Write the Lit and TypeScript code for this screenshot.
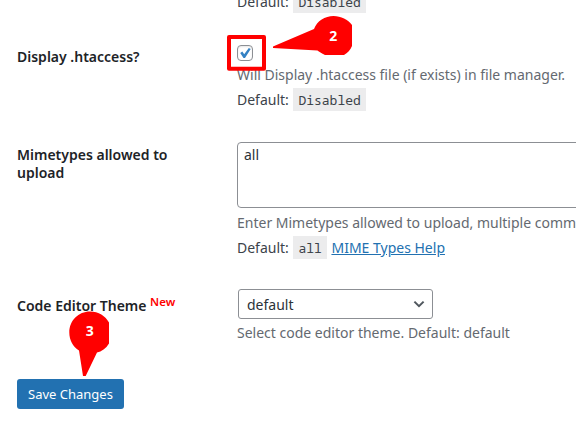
import { LitElement, html, css } from "lit";
import { customElement } from "lit/decorators.js";

@customElement("app-root")
export class AppRoot extends LitElement {
  static styles = css`
    :host {
      display: block;
      position: relative;
      width: 576px;
      height: 430px;
      overflow: hidden;
      background: #fff;
      color: #3c434a;
      font: 14px/25px "Noto Sans", sans-serif;
      white-space: nowrap;
    }
    * { box-sizing: border-box; }
    .form { display: flex; flex-direction: column; margin-top: -11px; }
    .row { display: grid; grid-template-columns: 220px 1fr; padding-left: 17px; }
    .row.access { padding-top: 31px; }
    .row.mime { padding-top: 30px; }
    .row.theme { padding-top: 29px; }
    .label { color: #1d2327; font-weight: 600; line-height: 18px; padding-top: 3px; }
    .theme .label { padding-top: 8px; }
    .mime .label { padding-top: 4px; }
    .field { min-width: 0; }
    .hint { color: #646970; height: 25px; }
    .line { height: 25px; }
    code {
      display: inline-block;
      height: 23px;
      line-height: 19px;
      padding: 3px 5px 1px 5.5px;
      margin: 0 1px 0 0.4px;
      background: #ececed;
      font-family: "Noto Sans Mono", "Liberation Mono", monospace;
      font-size: 13px;
    }
    .check {
      display: block;
      width: 16px;
      height: 16px;
      margin-bottom: 1px;
      border: 1px solid #8c8f94;
      border-radius: 4px;
      background: #fff;
      box-shadow: inset 0 1px 2px rgba(0, 0, 0, 0.1);
    }
    .check svg { display: block; width: 14px; height: 14px; }
    .area {
      width: 420px;
      height: 66px;
      padding: 2px 6px;
      margin-bottom: 2px;
      border: 1px solid #8c8f94;
      border-radius: 4px;
      color: #2c3338;
      line-height: 20px;
    }
    .select {
      display: flex;
      align-items: center;
      justify-content: space-between;
      width: 195px;
      height: 30px;
      margin: 0 0 1px 1px;
      padding: 0 5px 0 8px;
      border: 1px solid #8c8f94;
      border-radius: 3px;
      color: #2c3338;
    }
    a { color: #2271b1; text-decoration: underline; }
    .new {
      position: relative;
      top: -5px;
      color: #f00;
      font-size: 11.5px;
      font-weight: 600;
      line-height: 0;
    }
    .save {
      display: block;
      width: 107px;
      height: 30px;
      margin: 34px 0 0 17px;
      padding: 0;
      border: 0;
      border-radius: 3px;
      background: #2271b1;
      color: #fff;
      font: 13px/30px "Noto Sans", sans-serif;
      text-align: center;
    }
    .marks { position: absolute; inset: 0; pointer-events: none; }
    .marks text { font: 700 14px "Noto Sans", sans-serif; fill: #fff; text-anchor: middle; }
  `;

  render() {
    return html`
      <div class="form">
        <div class="row">
          <div></div>
          <div class="field"><div class="line">Default: <code>Disabled</code></div></div>
        </div>
        <div class="row access">
          <div class="label">Display .htaccess?</div>
          <div class="field">
            <span class="check" role="checkbox" aria-checked="true">
              <svg viewBox="0 0 14 14"><path d="M2.2 6.9 4.3 5.6 6.2 8.2 10.8 2 12.7 3 7 12 5.500 12Z" fill="#3582c4"/></svg>
            </span>
            <div class="hint">Will Display .htaccess file (if exists) in file manager.</div>
            <div class="line">Default: <code>Disabled</code></div>
          </div>
        </div>
        <div class="row mime">
          <div class="label">Mimetypes allowed to<br />upload</div>
          <div class="field">
            <div class="area">all</div>
            <div class="hint">Enter Mimetypes allowed to upload, multiple comma</div>
            <div class="line">Default: <code>all</code> <a>MIME Types Help</a></div>
          </div>
        </div>
        <div class="row theme">
          <div class="label">Code Editor Theme <span class="new">New</span></div>
          <div class="field">
            <div class="select">
              <span>default</span>
              <svg width="16" height="16" viewBox="0 0 16 16"><path d="M3.4 5.6 8 10.2 12.6 5.6" fill="none" stroke="#50575e" stroke-width="2"/></svg>
            </div>
            <div class="hint">Select code editor theme. Default: default</div>
          </div>
        </div>
        <button class="save">Save Changes</button>
      </div>
      <svg class="marks" width="576" height="430" viewBox="0 0 576 430">
        <rect x="229" y="37" width="35" height="31.700" fill="none" stroke="#f00" stroke-width="4" stroke-linejoin="round"/>
        <path d="M273 46.5 314 29C317 21 325 16 333.500 16C341 16 348 19.500 352 25V46C350.500 50 347.500 53 344 55H325C321.500 53.500 319 51.500 317.500 50.500L273 48Z" fill="#f00"/>
        <text x="333.300" y="41">2</text>
        <path d="M83 376 79 350.500C73 347 69.300 340 69.300 332.500C69.300 320.500 78.500 311.500 90 311.500C98.500 311.500 105.500 316 109 322.500V343.500C106 348.500 101.500 351.500 97 352.500L85.700 376Z" fill="#f00"/>
        <text x="89.700" y="336">3</text>
      </svg>
    `;
  }
}
